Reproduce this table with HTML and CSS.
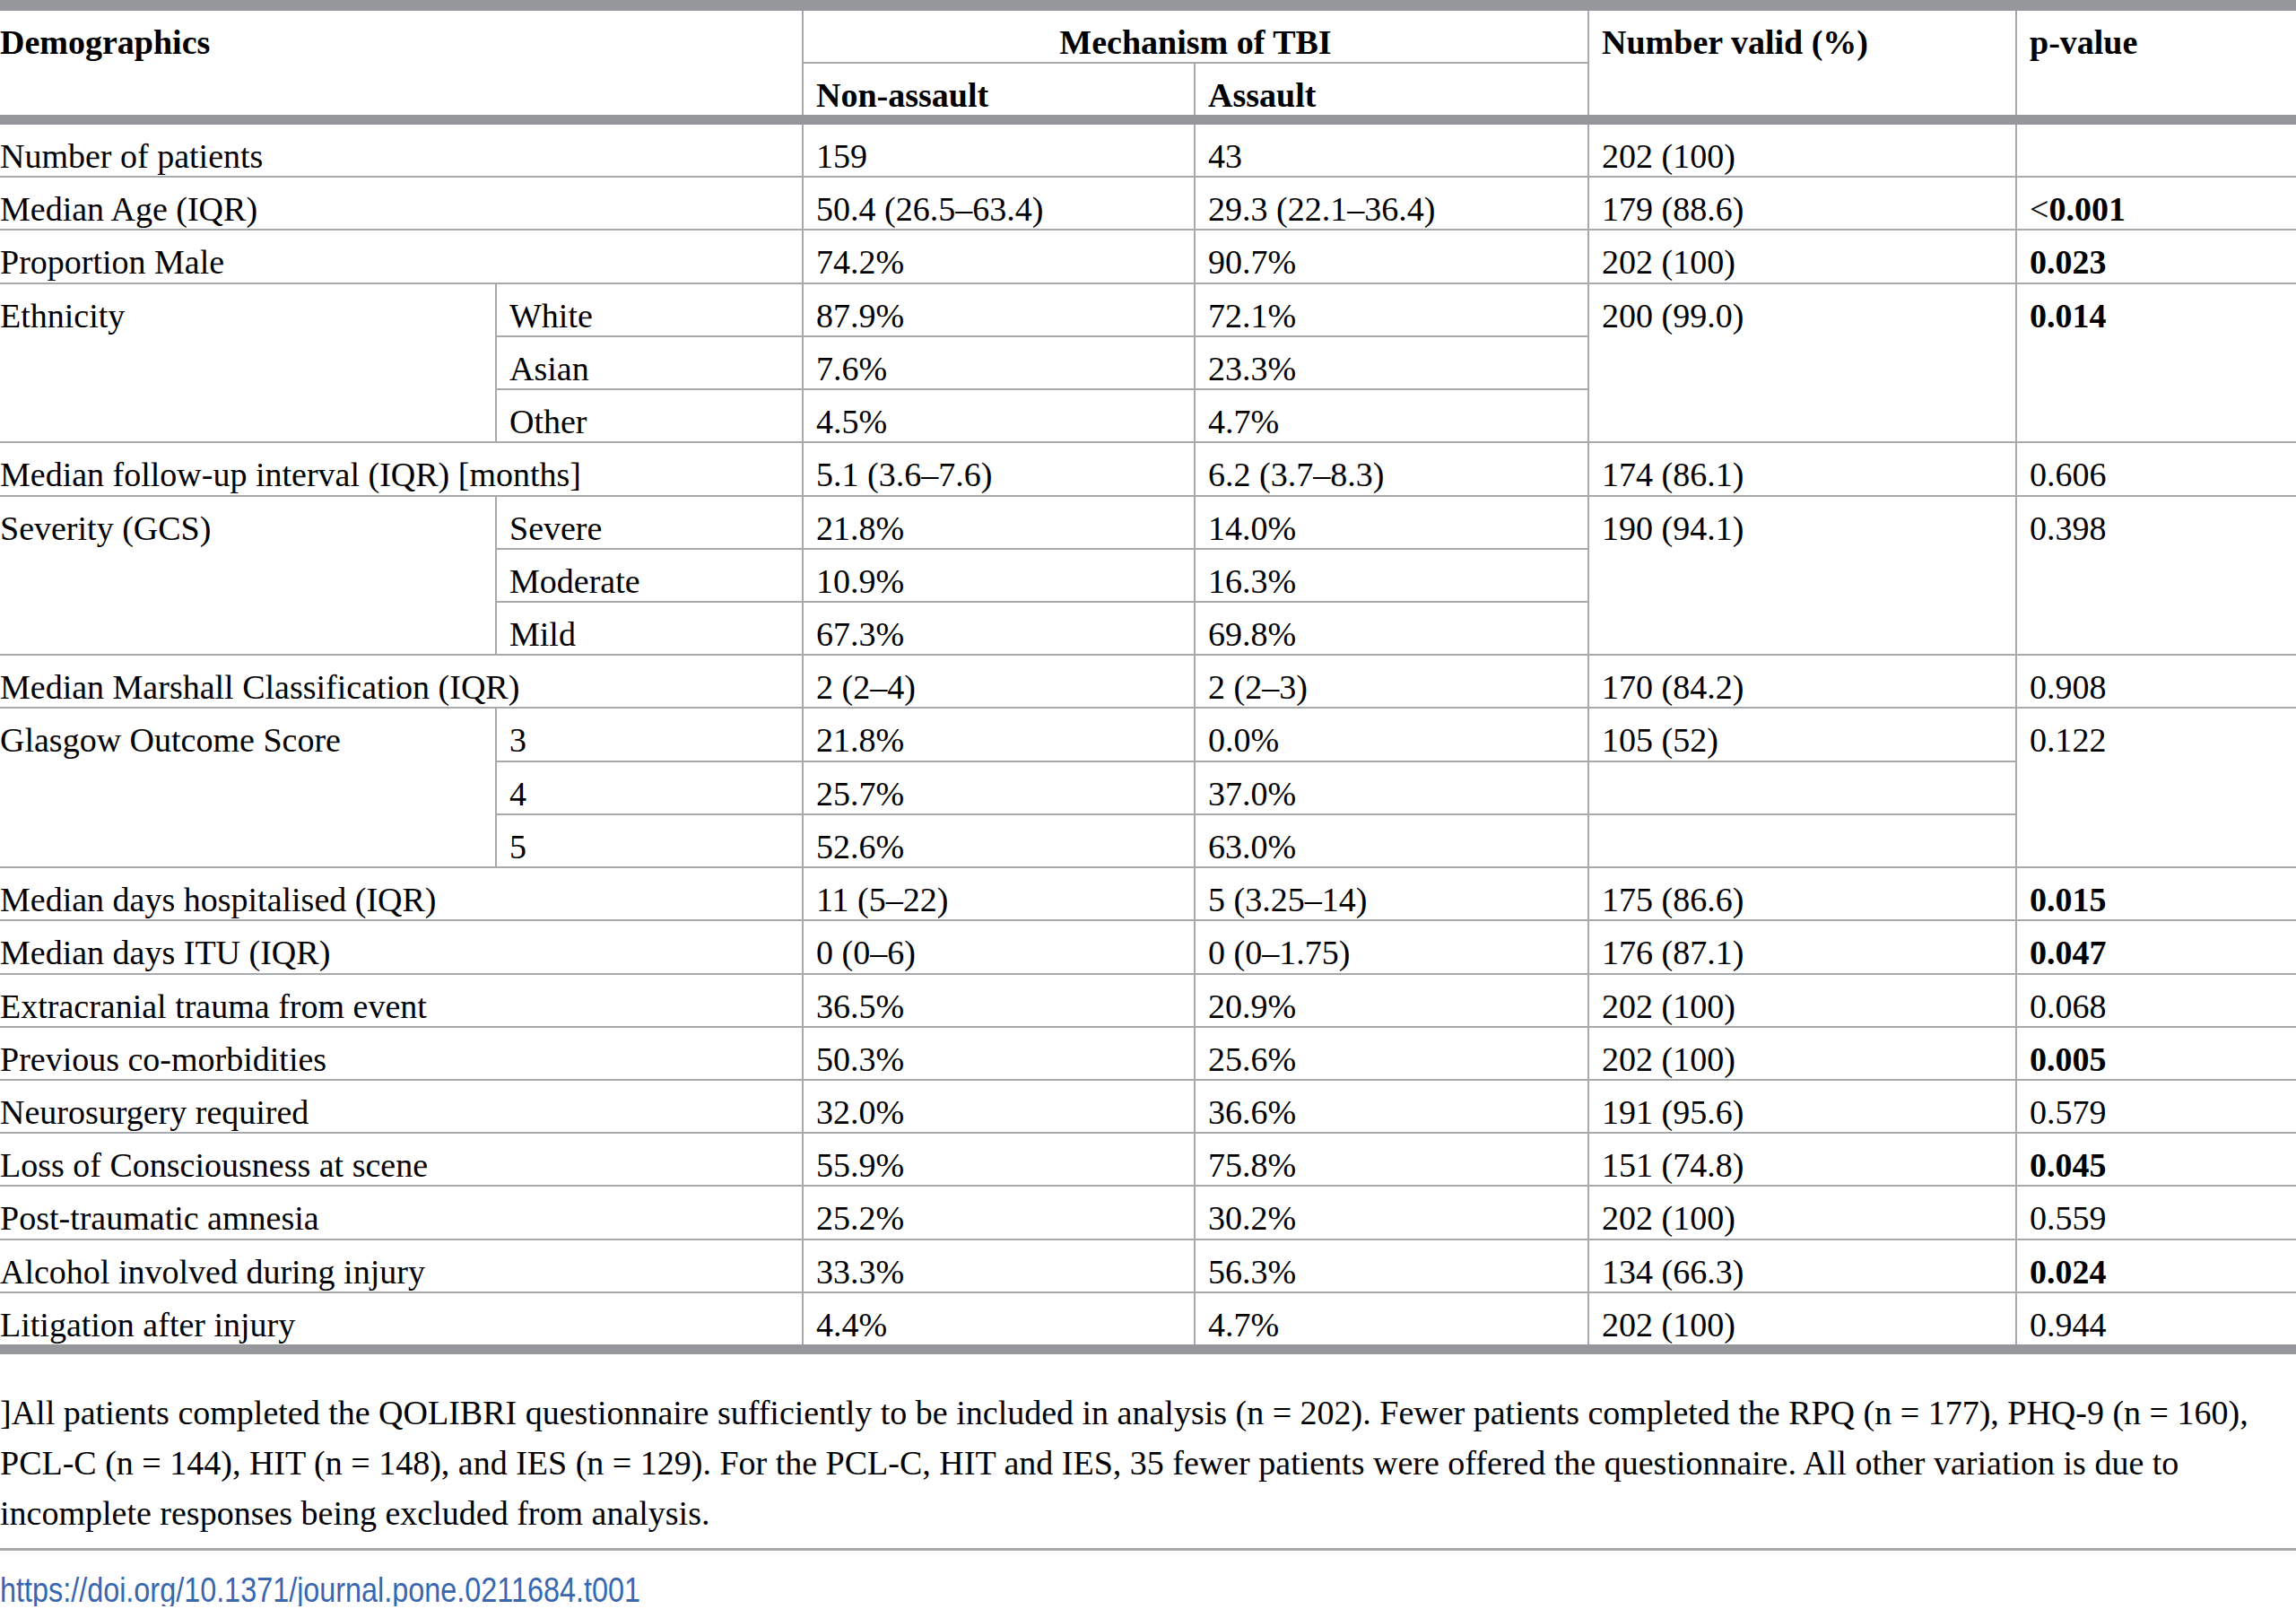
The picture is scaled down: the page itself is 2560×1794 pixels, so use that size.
FILE: index.html
```html
<!DOCTYPE html>
<html lang="en">
<head>
<meta charset="utf-8">
<title>Table 1</title>
<link rel="stylesheet" href="styles.css">
</head>
<body>
<table class="data">
  <colgroup>
    <col class="c-a"><col class="c-b"><col class="c-non"><col class="c-as"><col class="c-num"><col class="c-p">
  </colgroup>
  <thead>
    <tr>
      <th class="lab" colspan="2" rowspan="2">Demographics</th>
      <th class="mech" colspan="2">Mechanism of TBI</th>
      <th rowspan="2">Number valid (%)</th>
      <th rowspan="2">p-value</th>
    </tr>
    <tr>
      <th>Non-assault</th>
      <th>Assault</th>
    </tr>
  </thead>
  <tbody>
    <tr><td class="lab" colspan="2">Number of patients</td><td>159</td><td>43</td><td>202 (100)</td><td></td></tr>
    <tr><td class="lab" colspan="2">Median Age (IQR)</td><td>50.4 (26.5–63.4)</td><td>29.3 (22.1–36.4)</td><td>179 (88.6)</td><td><span class="lt">&lt;</span><b>0.001</b></td></tr>
    <tr><td class="lab" colspan="2">Proportion Male</td><td>74.2%</td><td>90.7%</td><td>202 (100)</td><td><b>0.023</b></td></tr>
    <tr><td class="lab top" rowspan="3">Ethnicity</td><td>White</td><td>87.9%</td><td>72.1%</td><td class="top" rowspan="3">200 (99.0)</td><td class="top" rowspan="3"><b>0.014</b></td></tr>
    <tr><td>Asian</td><td>7.6%</td><td>23.3%</td></tr>
    <tr><td>Other</td><td>4.5%</td><td>4.7%</td></tr>
    <tr><td class="lab" colspan="2">Median follow-up interval (IQR) [months]</td><td>5.1 (3.6–7.6)</td><td>6.2 (3.7–8.3)</td><td>174 (86.1)</td><td>0.606</td></tr>
    <tr><td class="lab top" rowspan="3">Severity (GCS)</td><td>Severe</td><td>21.8%</td><td>14.0%</td><td class="top" rowspan="3">190 (94.1)</td><td class="top" rowspan="3">0.398</td></tr>
    <tr><td>Moderate</td><td>10.9%</td><td>16.3%</td></tr>
    <tr><td>Mild</td><td>67.3%</td><td>69.8%</td></tr>
    <tr><td class="lab" colspan="2">Median Marshall Classification (IQR)</td><td>2 (2–4)</td><td>2 (2–3)</td><td>170 (84.2)</td><td>0.908</td></tr>
    <tr><td class="lab top" rowspan="3">Glasgow Outcome Score</td><td>3</td><td>21.8%</td><td>0.0%</td><td>105 (52)</td><td class="top" rowspan="3">0.122</td></tr>
    <tr><td>4</td><td>25.7%</td><td>37.0%</td><td></td></tr>
    <tr><td>5</td><td>52.6%</td><td>63.0%</td><td></td></tr>
    <tr><td class="lab" colspan="2">Median days hospitalised (IQR)</td><td>11 (5–22)</td><td>5 (3.25–14)</td><td>175 (86.6)</td><td><b>0.015</b></td></tr>
    <tr><td class="lab" colspan="2">Median days ITU (IQR)</td><td>0 (0–6)</td><td>0 (0–1.75)</td><td>176 (87.1)</td><td><b>0.047</b></td></tr>
    <tr><td class="lab" colspan="2">Extracranial trauma from event</td><td>36.5%</td><td>20.9%</td><td>202 (100)</td><td>0.068</td></tr>
    <tr><td class="lab" colspan="2">Previous co-morbidities</td><td>50.3%</td><td>25.6%</td><td>202 (100)</td><td><b>0.005</b></td></tr>
    <tr><td class="lab" colspan="2">Neurosurgery required</td><td>32.0%</td><td>36.6%</td><td>191 (95.6)</td><td>0.579</td></tr>
    <tr><td class="lab" colspan="2">Loss of Consciousness at scene</td><td>55.9%</td><td>75.8%</td><td>151 (74.8)</td><td><b>0.045</b></td></tr>
    <tr><td class="lab" colspan="2">Post-traumatic amnesia</td><td>25.2%</td><td>30.2%</td><td>202 (100)</td><td>0.559</td></tr>
    <tr><td class="lab" colspan="2">Alcohol involved during injury</td><td>33.3%</td><td>56.3%</td><td>134 (66.3)</td><td><b>0.024</b></td></tr>
    <tr class="last"><td class="lab" colspan="2">Litigation after injury</td><td>4.4%</td><td>4.7%</td><td>202 (100)</td><td>0.944</td></tr>
  </tbody>
</table>
<p class="note">]All patients completed the QOLIBRI questionnaire sufficiently to be included in analysis (n = 202). Fewer patients completed the RPQ (n = 177), PHQ-9 (n = 160),<br>PCL-C (n = 144), HIT (n = 148), and IES (n = 129). For the PCL-C, HIT and IES, 35 fewer patients were offered the questionnaire. All other variation is due to<br>incomplete responses being excluded from analysis.</p>
<div class="doi-line"><a class="doi" href="#">https://doi.org/10.1371/journal.pone.0211684.t001</a></div>
</body>
</html>
```

FILE: styles.css
```css
html, body {
  margin: 0;
  padding: 0;
  background: #ffffff;
}

body {
  width: 2560px;
  font-family: "Liberation Serif", "Times New Roman", serif;
  font-size: 38px;
  color: #000000;
}

.data {
  width: 2560px;
  table-layout: fixed;
  border-collapse: collapse;
  border-spacing: 0;
}

.c-a { width: 553px; }
.c-b { width: 342px; }
.c-non { width: 437px; }
.c-as { width: 439px; }
.c-num { width: 477px; }
.c-p { width: 312px; }

.data th,
.data td {
  border: 2px solid #a7a9ac;
  padding: 14px 14px 1px;
  line-height: 42.22px;
  text-align: left;
  vertical-align: middle;
  white-space: nowrap;
  overflow: hidden;
}

.data th {
  font-weight: bold;
  vertical-align: top;
  padding-top: 14px;
  padding-bottom: 1px;
  line-height: 42px;
}

.data th.mech {
  text-align: center;
}

.data thead tr:first-child th {
  border-top: 12px solid #95979a;
}

.data thead tr:last-child th,
.data thead th[rowspan] {
  border-bottom: 11px solid #95979a;
}

.data tr > :first-child {
  border-left: none;
}

.data tr > :last-child {
  border-right: none;
}

.data .lab {
  padding-left: 0;
}

.data .top {
  vertical-align: top;
}

.data tr.last td {
  border-bottom: 11px solid #95979a;
}

.lt {
  font-weight: normal;
}

.note {
  margin: 0;
  padding: 37px 0 11px;
  line-height: 56px;
  white-space: nowrap;
  border-bottom: 3px solid #a7a9ac;
}

.doi-line {
  margin-top: 22px;
  height: 40px;
}

.doi {
  display: inline-block;
  font-family: "Liberation Sans", Arial, sans-serif;
  font-size: 39px;
  line-height: 40px;
  color: #3a66ad;
  text-decoration: none;
  transform: scaleX(0.83);
  transform-origin: 0 0;
}
```
